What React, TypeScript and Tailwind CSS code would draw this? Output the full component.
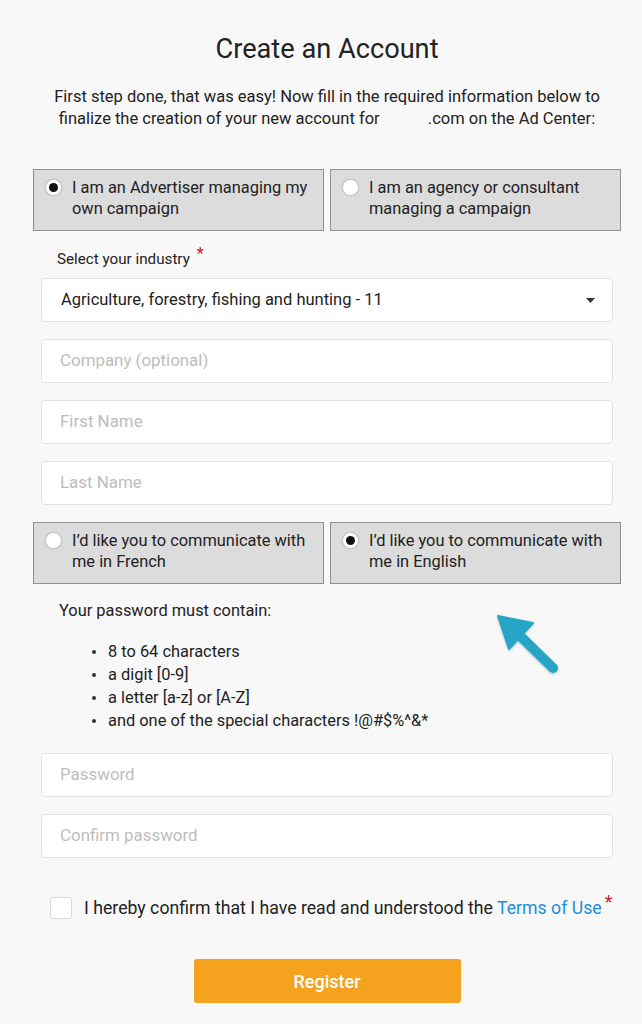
import React from "react";

function Radio({ checked }: { checked: boolean }) {
  return (
    <span className="mt-[2px] flex h-[17px] w-[17px] shrink-0 items-center justify-center rounded-full border border-[#c8c8c8] bg-white shadow-[0_0_1px_rgba(0,0,0,0.25)]">
      {checked && <span className="h-[9px] w-[9px] rounded-full bg-[#111]" />}
    </span>
  );
}

function ChoiceBox({ checked, children }: { checked: boolean; children: React.ReactNode }) {
  return (
    <div className="flex h-[62px] flex-1 items-start gap-[10px] border border-[#8f8f8f] bg-[#dcdcdc] pl-[11px] pr-2 pt-[7px] text-[16.4px] leading-[21px] text-[#222]">
      <Radio checked={checked} />
      <span>{children}</span>
    </div>
  );
}

function Field({ placeholder }: { placeholder: string }) {
  return (
    <div className="mx-2 flex h-[44px] items-center rounded-[4px] border border-[#e2e2e2] bg-white px-[18px] text-[16.9px] text-[#bdbdbd]">
      {placeholder}
    </div>
  );
}

export default function App() {
  return (
    <div
      className="min-h-[1024px] bg-[#f8f8f8] text-[#222]"
      style={{ fontFamily: "Roboto, 'Liberation Sans', sans-serif" }}
    >
      <div className="ml-[33px] w-[588px] pt-[33px]">
        <h1 className="text-center text-[27.2px] leading-[32px] text-[#222]">Create an Account</h1>
        <p className="mt-[21px] text-center text-[16.5px] leading-[22px]">
          First step done, that was easy! Now fill in the required information below to
          <br />
          finalize the creation of your new account for <span className="inline-block w-[44px]" />.com on the Ad Center:
        </p>

        <div className="mt-[39px] flex gap-[6px]">
          <ChoiceBox checked>
            I am an Advertiser managing my
            <br />
            own campaign
          </ChoiceBox>
          <ChoiceBox checked={false}>
            I am an agency or consultant
            <br />
            managing a campaign
          </ChoiceBox>
        </div>

        <div className="mt-[18px] flex items-start pl-6 text-[15.2px] leading-[20px]">
          <span>Select your industry</span>
          <span className="ml-[7px] mt-[-5px] text-[16px] text-[#d0202a]">*</span>
        </div>

        <div className="mx-2 mt-[9px] flex h-[44px] items-center justify-between rounded-[4px] border border-[#e2e2e2] bg-white pl-[19px] pr-[17px] text-[16.5px] text-[#222]">
          <span>Agriculture, forestry, fishing and hunting - 11</span>
          <svg width="9" height="5" viewBox="0 0 9 5" className="mt-[1px]">
            <path d="M0 0h9L4.5 5z" fill="#333" />
          </svg>
        </div>

        <div className="mt-[17px] flex flex-col gap-[17px]">
          <Field placeholder="Company (optional)" />
          <Field placeholder="First Name" />
          <Field placeholder="Last Name" />
        </div>

        <div className="mt-[17px] flex gap-[6px]">
          <ChoiceBox checked={false}>
            I’d like you to communicate with
            <br />
            me in French
          </ChoiceBox>
          <ChoiceBox checked>
            I’d like you to communicate with
            <br />
            me in English
          </ChoiceBox>
        </div>

        <div className="relative">
          <p className="mt-[16px] pl-[26px] text-[16.4px] leading-[22px]">Your password must contain:</p>
          <svg
            className="absolute left-[460px] top-[10px]"
            width="70"
            height="66"
            viewBox="0 0 70 66"
          >
            <defs>
              <filter id="arrowShadow" x="-20%" y="-20%" width="140%" height="140%">
                <feDropShadow dx="0" dy="1" stdDeviation="1" floodColor="#000" floodOpacity="0.25" />
              </filter>
            </defs>
            <g filter="url(#arrowShadow)" fill="#27a5c7" stroke="#27a5c7">
              <line x1="17" y1="16" x2="60" y2="58" strokeWidth="10" strokeLinecap="round" />
              <path d="M5 6 L40 13 L16 39 Z" strokeWidth="2" strokeLinejoin="round" />
            </g>
          </svg>
          <ul className="mt-[18px] pl-[59px] text-[16.4px] leading-[23px]">
            {[
              "8 to 64 characters",
              "a digit [0-9]",
              "a letter [a-z] or [A-Z]",
              "and one of the special characters !@#$%^&*",
            ].map((t) => (
              <li key={t} className="flex items-center">
                <span className="mr-[12px] inline-block h-[4px] w-[4px] rounded-full bg-[#333]" />
                {t}
              </li>
            ))}
          </ul>
        </div>

        <div className="mt-[21px] flex flex-col gap-[17px]">
          <Field placeholder="Password" />
          <Field placeholder="Confirm password" />
        </div>

        <div className="mt-[39px] flex items-center pl-[17px]">
          <span className="h-[22px] w-[22px] shrink-0 rounded-[3px] border border-[#d9d9d9] bg-white" />
          <span className="ml-[12px] text-[17.7px] leading-[22px]">
            I hereby confirm that I have read and understood the{" "}
            <span className="text-[#1a8ee0]">Terms of Use</span>
          </span>
          <span className="ml-[3px] mt-[-14px] text-[18px] text-[#d0202a]">*</span>
        </div>

        <div className="mt-[40px] flex justify-center">
          <button className="h-[44px] w-[267px] rounded-[3px] bg-[#f5a21f] text-[18px] font-medium text-white">
            Register
          </button>
        </div>
      </div>
    </div>
  );
}
